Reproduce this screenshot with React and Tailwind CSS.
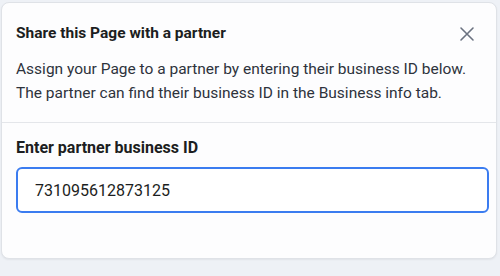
import React, { useState } from 'react';

function CloseIcon() {
  return (
    <svg width="16" height="16" viewBox="0 0 16 16" fill="none" stroke="currentColor" strokeWidth="1.6" strokeLinecap="round">
      <path d="M2 2L14 14M14 2L2 14" />
    </svg>
  );
}

export default function App() {
  const [partnerId, setPartnerId] = useState('731095612873125');

  return (
    <div className="w-[500px] h-[276px] bg-[#eef1f6] pt-[2px] pl-[1px] pr-[3px] overflow-hidden" style={{ fontFamily: 'Roboto, "Noto Sans", sans-serif' }}>
      <div className="h-[257px] bg-[#fdfdfe] border border-[#dfe2e7] rounded-[8px] shadow-[0_1px_2px_rgba(0,0,0,0.06)] flex flex-col">
        {/* Header */}
        <div className="px-[14px] pt-[19px] pb-[17px] border-b border-[#e4e6ea]">
          <div className="flex items-center justify-between">
            <h2 className="text-[15.5px] font-bold text-[#1c1e21] leading-[22px]">Share this Page with a partner</h2>
            <button className="text-[#6b7280] mr-[7px] mt-[1px]">
              <CloseIcon />
            </button>
          </div>
          <p className="mt-[13px] text-[15.5px] leading-[24px] text-[#2e333c]">
            Assign your Page to a partner by entering their business ID below.
            <br />
            The partner can find their business ID in the Business info tab.
          </p>
        </div>

        {/* Body */}
        <div className="px-[14px] pt-[14px]">
          <label className="block text-[16px] font-bold text-[#1c1e21] leading-[22px]">Enter partner business ID</label>
          <input
            value={partnerId}
            onChange={(e) => setPartnerId(e.target.value)}
            className="mt-[8px] w-[473px] h-[46px] px-[17px] rounded-[6px] border-2 border-[#3b7cf0] bg-white text-[16px] text-[#1c1e21] outline-none"
          />
        </div>
      </div>
    </div>
  );
}
